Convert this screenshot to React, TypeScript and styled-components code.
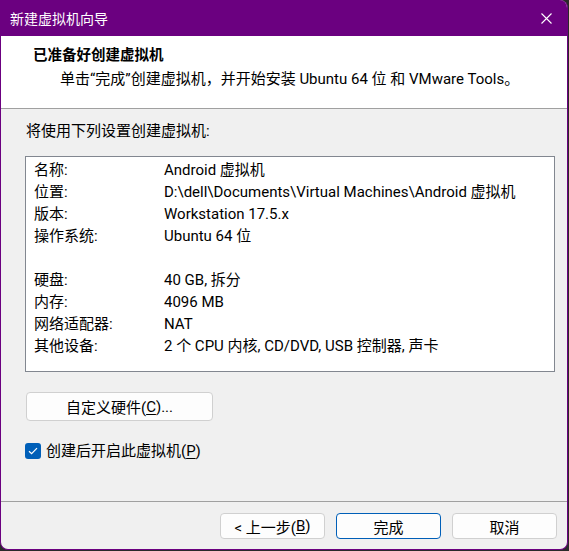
import React from "react";
import styled, { createGlobalStyle } from "styled-components";

const Global = createGlobalStyle`
  html, body { margin: 0; padding: 0; background: #2a2a2a; }
  body { width: 569px; height: 551px; overflow: hidden; }
  * { box-sizing: border-box; }
`;

const FONT = `Roboto, "Noto Sans CJK SC", sans-serif`;

const Window = styled.div`
  width: 568px;
  height: 550px;
  display: flex;
  flex-direction: column;
  background: #f0f0f0;
  border: 1px solid #6b0080;
  border-top: none;
  border-radius: 0 8px 8px 8px;
  overflow: hidden;
  font-family: ${FONT};
  font-size: 15px;
  color: #000;
`;

const TitleBar = styled.div`
  height: 36px;
  flex: none;
  background: #6b0080;
  display: flex;
  align-items: center;
  justify-content: space-between;
  padding: 0 15px 0 9px;
  color: #fff;
  font-size: 14px;
`;

const Header = styled.div`
  flex: none;
  height: 73px;
  background: #fff;
  border-bottom: 1px solid #a0a0a0;
  padding: 10px 0 0 32px;
`;

const HeadTitle = styled.div`
  font-weight: bold;
  font-size: 14.5px;
  line-height: 20px;
`;

const HeadSub = styled.div`
  margin-top: 3px;
  padding-left: 27px;
  line-height: 20px;
`;

const Body = styled.div`
  flex: 1;
  display: flex;
  flex-direction: column;
  padding: 12px 12px 0 24px;
`;

const Intro = styled.div`
  line-height: 20px;
  padding-left: 1px;
`;

const SummaryBox = styled.div`
  margin-top: 15px;
  width: 530px;
  height: 216px;
  background: #fff;
  border: 1px solid #828790;
  padding: 2px 0 0 8px;
`;

const Row = styled.div`
  display: grid;
  grid-template-columns: 130px 1fr;
  height: 22px;
  line-height: 22px;
  white-space: nowrap;
`;

const Button = styled.button<{ $primary?: boolean; $w?: number; $h?: number }>`
  width: ${(p) => p.$w ?? 105}px;
  height: ${(p) => p.$h ?? 26}px;
  background: #fdfdfd;
  border: 1px solid ${(p) => (p.$primary ? "#005fb8" : "#d0d0d0")};
  border-radius: 4px;
  font-family: ${FONT};
  font-size: 15px;
  color: #000;
  padding: 0;
  display: flex;
  align-items: center;
  justify-content: center;
`;

const CustomWrap = styled.div`
  margin-top: 20px;
  padding-left: 1px;
`;

const CheckRow = styled.label`
  margin-top: 22px;
  display: flex;
  align-items: center;
  gap: 5px;
  line-height: 16px;
`;

const CheckBox = styled.span`
  width: 16px;
  height: 16px;
  border-radius: 3px;
  background: #005fb8;
  display: flex;
  align-items: center;
  justify-content: center;
`;

const Footer = styled.div`
  flex: none;
  height: 48px;
  border-top: 1px solid #a0a0a0;
  display: flex;
  justify-content: flex-end;
  gap: 11px;
  padding: 11px 10px 0 0;
`;

const U = styled.span`
  text-decoration: underline;
  text-underline-offset: 2px;
`;

const rows: [string, string][] = [
  ["名称:", "Android 虚拟机"],
  ["位置:", "D:\\dell\\Documents\\Virtual Machines\\Android 虚拟机"],
  ["版本:", "Workstation 17.5.x"],
  ["操作系统:", "Ubuntu 64 位"],
  ["", ""],
  ["硬盘:", "40 GB, 拆分"],
  ["内存:", "4096 MB"],
  ["网络适配器:", "NAT"],
  ["其他设备:", "2 个 CPU 内核, CD/DVD, USB 控制器, 声卡"],
];

export default function App() {
  return (
    <>
      <Global />
      <Window>
        <TitleBar>
          <span>新建虚拟机向导</span>
          <svg width="11" height="11" viewBox="0 0 11 11">
            <path d="M0.5 0.5 L10.5 10.5 M10.5 0.5 L0.5 10.5" stroke="#fff" strokeWidth="1.1" />
          </svg>
        </TitleBar>
        <Header>
          <HeadTitle>已准备好创建虚拟机</HeadTitle>
          <HeadSub>单击“完成”创建虚拟机，并开始安装 Ubuntu 64 位 和 VMware Tools。</HeadSub>
        </Header>
        <Body>
          <Intro>将使用下列设置创建虚拟机:</Intro>
          <SummaryBox>
            {rows.map(([k, v], i) => (
              <Row key={i}>
                <span>{k}</span>
                <span>{v}</span>
              </Row>
            ))}
          </SummaryBox>
          <CustomWrap>
            <Button $w={187} $h={29}>
              自定义硬件(<U>C</U>)...
            </Button>
          </CustomWrap>
          <CheckRow>
            <CheckBox>
              <svg width="10" height="8" viewBox="0 0 10 8">
                <path d="M1 4.2 L3.6 6.6 L9 1.2" stroke="#fff" strokeWidth="1.2" fill="none" />
              </svg>
            </CheckBox>
            <span>
              创建后开启此虚拟机(<U>P</U>)
            </span>
          </CheckRow>
        </Body>
        <Footer>
          <Button>
            &lt; 上一步(<U>B</U>)
          </Button>
          <Button $primary>完成</Button>
          <Button>取消</Button>
        </Footer>
      </Window>
    </>
  );
}
